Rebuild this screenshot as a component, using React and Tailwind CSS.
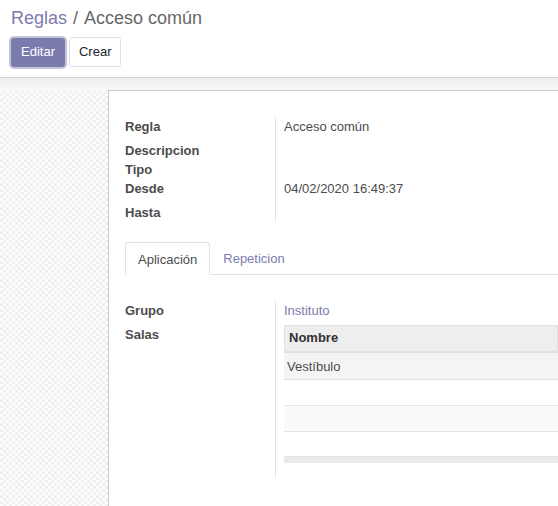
import React from 'react';

const font = { fontFamily: '"Liberation Sans", Arial, sans-serif' };

function Field({ label, value, h, link }) {
  return (
    <div className={`flex ${h}`}>
      <div className="w-[150px] shrink-0 font-bold text-[#4c4c4c] leading-[18px]">{label}</div>
      <div className={`pl-[9px] leading-[18px] ${link ? 'text-[#7c7bad]' : 'text-[#4c4c4c]'}`}>{value}</div>
    </div>
  );
}

export default function App() {
  return (
    <div className="w-[558px] h-[506px] overflow-hidden bg-white text-[13px]" style={font}>
      {/* control panel */}
      <div className="h-[78px] border-b border-[#d0d0d8] pl-[11px] pt-[5px]">
        <div className="text-[18px] leading-[26px] text-[#666]">
          <span className="text-[#7c7bad]">Reglas</span>
          <span className="mx-[6px]">/</span>
          <span>Acceso común</span>
        </div>
        <div className="mt-[6px] flex items-center gap-[4px]">
          <button className="h-[29px] px-[10px] rounded-[3px] bg-[#7c7bad] text-white text-[13px] shadow-[0_0_0_2px_rgba(124,123,173,0.45)]">
            Editar
          </button>
          <button className="h-[30px] px-[9px] rounded-[3px] border border-[#dee2e6] bg-white text-[#212529] text-[13px]">
            Crear
          </button>
        </div>
      </div>

      {/* content */}
      <div className="bg-gradient-to-b from-[#ededed] to-[#f8f8f8] bg-[length:100%_12px] bg-no-repeat pt-[12px]">
        <div className="flex">
          <div className="w-[108px] shrink-0 h-[420px] bg-[repeating-conic-gradient(#f0f0f0_0%_25%,#fcfcfc_0%_50%)] bg-size-[6px_6px]" />
          <div className="flex-1 min-w-0 bg-white border-l border-t border-[#c8c8d4] pt-[27px] pl-[16px]">
            <div className="relative">
              <div className="absolute left-[150px] -top-px h-[104px] border-l border-[#e0e0e0]" />
              <Field label="Regla" value="Acceso común" h="h-[24px]" />
              <Field label="Descripcion" value="" h="h-[19px]" />
              <Field label="Tipo" value="" h="h-[19px]" />
              <Field label="Desde" value="04/02/2020 16:49:37" h="h-[24px]" />
              <Field label="Hasta" value="" h="h-[18px]" />
            </div>

            {/* tabs */}
            <div className="mt-[20px] flex border-b border-[#dee2e6] h-[33px]">
              <div className="h-[33px] px-[12px] border border-[#dee2e6] border-b-white rounded-t-[3px] bg-white text-[#4c4c4c] leading-[33px] -mb-px">
                Aplicación
              </div>
              <div className="h-[33px] px-[13px] text-[#7c7bad] leading-[33px]">Repeticion</div>
            </div>

            <div className="mt-[26px] flex">
              <div className="w-[150px] shrink-0 text-[#4c4c4c] font-bold leading-[18px]">
                <div className="h-[24px] pt-[1px]">Grupo</div>
                <div className="h-[18px] pt-[1px]">Salas</div>
              </div>
              <div className="flex-1 min-w-0 border-l border-[#e0e0e0] pl-[8px] pb-[14px]">
                <div className="h-[24px] pt-[1px] leading-[18px] text-[#7c7bad]">Instituto</div>
                <div>
                  <div className="h-[28px] bg-[#eeeeee] border border-[#dee2e6] border-b-2 border-b-[#dee2e6] pl-[4px] font-bold text-[#333] leading-[24px]">
                    Nombre
                  </div>
                  <div className="h-[27px] bg-[#f4f4f4] border-b border-[#dee2e6] pl-[3px] text-[#4c4c4c] leading-[28px]">
                    Vestíbulo
                  </div>
                  <div className="h-[26px] bg-white border-b border-[#e4e4e4]" />
                  <div className="h-[26px] bg-[#fafafa] border-b border-[#e4e4e4]" />
                  <div className="h-[25px] bg-white border-b border-[#e4e4e4]" />
                  <div className="h-[6px] bg-[#ebebeb]" />
                </div>
              </div>
            </div>
          </div>
        </div>
      </div>
    </div>
  );
}
